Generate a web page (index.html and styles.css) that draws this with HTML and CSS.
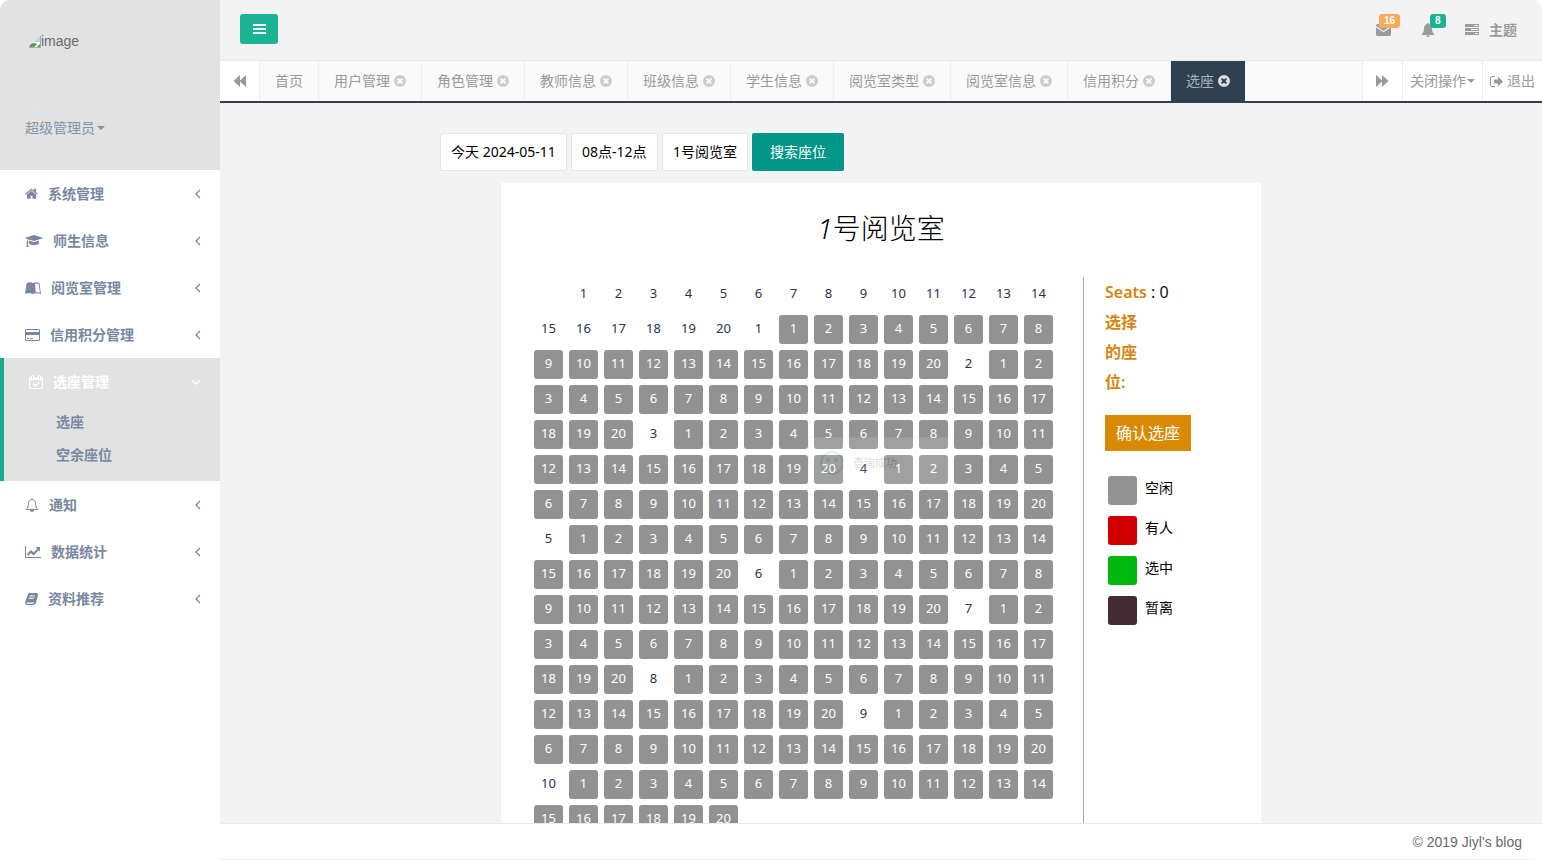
FILE: index.html
```html
<!DOCTYPE html>
<html lang="zh-CN">
<head>
<meta charset="utf-8">
<title>选座</title>
<link rel="stylesheet" href="styles.css">
</head>
<body>
<svg class="sprite" aria-hidden="true">
  <symbol id="left" viewBox="0 0 6 10"><path d="M5 1L1 5l4 4" fill="none" stroke="currentColor" stroke-width="1.3"/></symbol>
  <symbol id="down" viewBox="0 0 10 6"><path d="M1 1l4 4 4-4" fill="none" stroke="currentColor" stroke-width="1.4"/></symbol>
  <symbol id="caret" viewBox="0 0 8 4"><path d="M0 0h8L4 4z"/></symbol>
  <symbol id="close" viewBox="0 0 12 12"><path fill-rule="evenodd" d="M6 0a6 6 0 1 1 0 12A6 6 0 0 1 6 0zM4.300 2.900L2.900 4.300 4.600 6 2.900 7.700l1.400 1.400L6 7.400l1.700 1.700 1.400-1.400L7.400 6l1.700-1.700-1.400-1.400L6 4.600z"/></symbol>
  <symbol id="forward" viewBox="0 0 13 12"><path d="M0 0l6 5.500V0l6.500 6L6 12V6.500L0 12z"/></symbol>
</svg>
<div class="app">
  <aside class="sidebar">
    <div class="profile">
      <div class="avatar">
        <svg width="13" height="14" viewBox="0 0 13 14"><path d="M1 13L12 3v10z" fill="#fff"/><path d="M6 8l6-6v6z" fill="#bcd3f3"/><path d="M1 13c2-4 5-5 8-3l-3 3z" fill="#4ca344"/><path d="M9 13l3-3v3z" fill="#4ca344"/><path d="M12.500 2v11.500H1" fill="none" stroke="#aaa"/></svg><span>image</span>
      </div>
      <div class="user-name">admin</div>
      <button class="role" type="button">超级管理员<svg width="8" height="4"><use href="#caret"/></svg></button>
    </div>
    <nav class="menu">
      <a class="item" href="#system"><svg width="13" height="13" viewBox="64 128 1664 1472"><path d="M1472 992v480q0 26-19 45t-45 19h-384v-384h-256v384h-384q-26 0-45-19t-19-45v-480q0-1 .5-3t.5-3l575-474 575 474q1 2 1 6zm223-69l-62 74q-8 9-21 11h-3q-13 0-21-7l-692-577-692 577q-12 8-24 7-13-2-21-11l-62-74q-8-10-7-23.500t11-21.500l719-599q32-26 76-26t76 26l244 204v-195q0-14 9-23t23-9h192q14 0 23 9t9 23v408l219 182q10 8 11 21.500t-7 23.500z"/></svg><span>系统管理</span><svg class="arrow" width="6" height="10"><use href="#left"/></svg></a>
      <a class="item" href="#people"><svg width="18" height="14" viewBox="0 0 2304 1792"><path d="M1774 836l18 316q4 69-82 128t-235 93.500-323 34.500-323-34.500-235-93.500-82-128l18-316 574 181q22 7 48 7t48-7zm530-324q0 23-22 31l-1120 352q-4 1-10 1t-10-1l-652-206q-43 34-71 111.500t-34 178.500q63 36 63 109 0 69-58 107l58 433q2 14-8 25-9 11-24 11h-192q-15 0-24-11-10-11-8-25l58-433q-58-38-58-107 0-73 65-111 11-207 98-330l-333-104q-22-8-22-31t22-31l1120-352q4-1 10-1t10 1l1120 352q22 8 22 31z"/></svg><span>师生信息</span><svg class="arrow" width="6" height="10"><use href="#left"/></svg></a>
      <a class="item" href="#rooms"><svg width="16" height="12" viewBox="0 0 16 12"><path d="M0 12L1.500 1.500C3.500 0 6.500 0 8 1.300 9.500 0 12.500 0 14.500 1.500L16 12c-2-1-6-1-8 0-2-1-6-1-8 0z"/><path d="M10 1.800c1-.5 2.500-.5 3.600.3L15 10.500c-1.600-.4-3-.4-4.200-.1z" fill="#fff"/></svg><span>阅览室管理</span><svg class="arrow" width="6" height="10"><use href="#left"/></svg></a>
      <a class="item" href="#credit"><svg width="15" height="12" viewBox="0 0 15 12"><path fill-rule="evenodd" d="M1 0h13l1 1v10l-1 1H1l-1-1V1zM1 1v2h13V1zM1 6v5h13V6zM2 9h2v1H2zM5 9h3v1H5z"/></svg><span>信用积分管理</span><svg class="arrow" width="6" height="10"><use href="#left"/></svg></a>
      <div class="group">
        <a class="item" href="#seat"><svg width="14" height="14" viewBox="0 0 14 14"><path fill-rule="evenodd" d="M1 2h1V1l1-1h1l1 1v1h4V1l1-1h1l1 1v1h1l1 1v10l-1 1H1l-1-1V3zM1 5v8h12V5zM3 1v3h1V1zM10 1v3h1V1z"/><path d="M4 8.500L6.200 11 10.500 7" fill="none" stroke="currentColor" stroke-width="1.400"/></svg><span>选座管理</span><svg class="arrow" width="10" height="6"><use href="#down"/></svg></a>
        <a class="sub" href="#pick">选座</a>
        <a class="sub" href="#free">空余座位</a>
      </div>
      <a class="item" href="#notice"><svg width="14" height="14" viewBox="0 0 14 14"><path d="M7 0.500v1M7 1.500C4.500 1.500 3.500 3.500 3.500 5.500 3.500 8.500 2.500 10 1 11.500h12C11.500 10 10.500 8.500 10.500 5.500 10.500 3.500 9.500 1.500 7 1.500z" fill="none" stroke="currentColor"/><path d="M5 12h4a2 2 0 0 1-4 0z"/></svg><span>通知</span><svg class="arrow" width="6" height="10"><use href="#left"/></svg></a>
      <a class="item" href="#stats"><svg width="16" height="12" viewBox="0 0 16 12"><path d="M0 0h1v11h15v1H0z"/><path d="M2.500 9L6 5.500 8.500 8 13 3.500" fill="none" stroke="currentColor" stroke-width="2"/><path d="M10.500 1H15v4.500z"/></svg><span>数据统计</span><svg class="arrow" width="6" height="10"><use href="#left"/></svg></a>
      <a class="item" href="#docs"><svg width="13" height="12" viewBox="0 0 13 12"><path fill-rule="evenodd" d="M4 0h8l1 1-3 10-1 1H1.500Q-.3 11 .2 9L3 1zM4.700 2.500l-.3 1h5.300l.3-1zM4 4.800l-.3 1H9l.3-1zM1.500 9.500q-.4 1.200.5 1.300h6.600l.4-1.300z"/><path d="M12.500 2.500L10 11" stroke="currentColor" fill="none"/></svg><span>资料推荐</span><svg class="arrow" width="6" height="10"><use href="#left"/></svg></a>
    </nav>
  </aside>
  <div class="page">
    <header class="topbar">
      <button class="toggle" type="button" aria-label="菜单"><svg width="13" height="10" viewBox="0 0 13 10"><path d="M0 0h13v2H0zM0 4h13v2H0zM0 8h13v2H0z"/></svg></button>
      <div class="tools">
        <a class="tool" href="#mail" aria-label="消息"><svg width="15" height="12" viewBox="0 0 15 12"><path d="M0 1l1-1h13l1 1v.8L7.500 7 0 1.800zM0 3.200L7.500 8.300 15 3.200V11l-1 1H1l-1-1z"/></svg><span class="badge orange">16</span></a>
        <a class="tool" href="#alerts" aria-label="提醒"><svg width="14" height="14" viewBox="0 0 14 14"><path d="M6.300 0h1.400v1C10 1.500 11 3.200 11 5.500c0 3 .9 4.500 2.500 6v.5H.5v-.5C2.100 10 3 8.500 3 5.500 3 3.200 4 1.500 6.300 1zM5.200 12.400h3.600a1.800 1.800 0 0 1-3.600 0z"/></svg><span class="badge green">8</span></a>
        <a class="tool theme" href="#theme"><svg width="14" height="11" viewBox="0 0 14 11"><path fill-rule="evenodd" d="M0 0h14v3H0zM9 1v1h4V1zM0 4h14v3H0zM6 5v1h7V5zM0 8h14v3H0zM10 9v1h3V9z"/></svg>主题</a>
      </div>
    </header>
    <div class="tabbar">
      <button class="cell scroll" type="button" aria-label="向左"><svg class="flip" width="13" height="12"><use href="#forward"/></svg></button>
      <nav class="tabs">
        <a href="#t0">首页</a>
        <a href="#t1">用户管理<svg width="12" height="12"><use href="#close"/></svg></a>
        <a href="#t2">角色管理<svg width="12" height="12"><use href="#close"/></svg></a>
        <a href="#t3">教师信息<svg width="12" height="12"><use href="#close"/></svg></a>
        <a href="#t4">班级信息<svg width="12" height="12"><use href="#close"/></svg></a>
        <a href="#t5">学生信息<svg width="12" height="12"><use href="#close"/></svg></a>
        <a href="#t6">阅览室类型<svg width="12" height="12"><use href="#close"/></svg></a>
        <a href="#t7">阅览室信息<svg width="12" height="12"><use href="#close"/></svg></a>
        <a href="#t8">信用积分<svg width="12" height="12"><use href="#close"/></svg></a>
        <a class="active" href="#t9">选座<svg width="12" height="12"><use href="#close"/></svg></a>
      </nav>
      <button class="cell scroll next" type="button" aria-label="向右"><svg width="13" height="12"><use href="#forward"/></svg></button>
      <button class="cell ops" type="button">关闭操作<svg width="8" height="4"><use href="#caret"/></svg></button>
      <a class="cell exit" href="#logout"><svg width="13" height="11" viewBox="0 0 13 11"><path d="M5 .5H2Q.5.500.5 2v7q0 1.500 1.500 1.500h3" fill="none" stroke="currentColor"/><path d="M4 3.500h4V.5l5 5-5 5v-3H4z"/></svg>退出</a>
    </div>
    <main class="content">
      <form class="search">
        <input class="day" type="text" value="今天 2024-05-11" aria-label="日期" readonly>
        <input class="hours" type="text" value="08点-12点" aria-label="时段" readonly>
        <input class="room" type="text" value="1号阅览室" aria-label="阅览室" readonly>
        <button type="button">搜索座位</button>
      </form>
      <section class="panel">
        <h2><i>1</i>号阅览室</h2>
        <div class="booking">
          <div class="seats" id="seats"></div>
          <div class="details">
            <p><b>Seats</b> : 0</p>
            <p class="chosen"><b>选择的座位:</b></p>
            <button class="confirm" type="button">确认选座</button>
            <ul class="legend">
              <li><span class="swatch free"></span>空闲</li>
              <li><span class="swatch taken"></span>有人</li>
              <li><span class="swatch picked"></span>选中</li>
              <li><span class="swatch away"></span>暂离</li>
            </ul>
          </div>
        </div>
      </section>
    </main>
    <footer>© 2019 Jiyl's blog</footer>
  </div>
  <div class="toast" role="status"><svg width="24" height="24" viewBox="0 0 24 24"><circle cx="12" cy="12" r="11" fill="none" stroke="#3cb27a" stroke-width="2"/><circle cx="8" cy="9" r="2" fill="#3cb27a"/><circle cx="16" cy="9" r="2" fill="#3cb27a"/><path d="M7 15q5 5 10 0" fill="none" stroke="#3cb27a" stroke-width="2"/></svg>查询成功</div>
</div>
<script src="seats.js"></script>
</body>
</html>
```
FILE: styles.css
```css
* { box-sizing: border-box; }
body {
  margin: 0;
  background: #fff;
  font: 14px/20px "Liberation Sans", "Noto Sans CJK SC", sans-serif;
  color: #676a6c;
}
a { color: inherit; text-decoration: none; }
button { font: inherit; color: inherit; border: 0; padding: 0; background: none; }
svg { fill: currentColor; flex: none; }
.sprite { position: absolute; width: 0; height: 0; }
.app { display: flex; height: 100vh; border-radius: 10px; overflow: hidden; }

.sidebar { width: 220px; flex: none; background: #fff; }
.profile { height: 170px; padding: 30px 25px 0; background: #e2e2e2; }
.avatar { display: flex; align-items: center; height: 70px; padding: 0 0 48px 3px; }
.user-name { height: 18px; font-weight: 700; color: #dde4ee; }
.role { display: flex; align-items: center; gap: 2px; color: #8095a8; }
.menu { font-weight: 600; color: #7888a0; }
.item { display: flex; align-items: center; gap: 10px; height: 47px; padding: 0 19px 0 25px; }
.arrow { margin-left: auto; }
.group { border-left: 4px solid #19aa8d; background: #e2e2e2; padding-bottom: 9px; }
.group .item { height: 48px; padding-bottom: 1px; color: #fff; }
.sub { display: block; padding-left: 52px; line-height: 33px; }

.page { flex: 1; min-width: 0; display: flex; flex-direction: column; background: #f3f3f3; }
.topbar { height: 60px; flex: none; display: flex; align-items: center; justify-content: space-between; padding: 0 25px 2px 20px; color: #999c9e; }
.toggle { width: 38px; height: 30px; border-radius: 3px; background: #1ab394; color: #fff; }
.tools { display: flex; align-items: center; gap: 30px; font-weight: 600; }
.tool { position: relative; display: flex; align-items: center; padding-top: 2px; }
.theme { gap: 10px; padding-top: 1px; }
.badge { position: absolute; left: 3px; bottom: 8px; padding: 0 5px; border-radius: 3px; font-size: 10px; line-height: 14px; color: #fff; }
.badge.green { left: 9px; bottom: 9px; }
.orange { background: #f8ac59; }
.green { background: #1ab394; }

.tabbar { flex: none; display: flex; height: 43px; border-top: 1px solid #e7e7e7; border-bottom: 2px solid #2f4050; background: #fafafa; color: #999; }
.cell { display: flex; align-items: center; justify-content: center; background: #fff; border-left: 1px solid #eee; }
.scroll { width: 40px; }
.scroll:first-child { border-left: 0; border-right: 1px solid #eee; }
.flip { transform: scaleX(-1); }
.tabs { flex: 1; min-width: 0; display: flex; overflow: hidden; }
.tabs a { display: flex; align-items: center; gap: 4px; padding: 0 15px; border-right: 1px solid #eee; white-space: nowrap; }
.tabs svg { color: #ccc; }
.tabs .active { background: #2f4050; color: #a7b1c2; border-right: 0; }
.tabs .active svg { color: #ddd; }
.ops { width: 80px; gap: 1px; }
.exit { width: 60px; gap: 4px; }

.content { flex: 1; min-height: 0; overflow: hidden; padding-top: 30px; font-family: "Noto Sans", "Noto Sans CJK SC", sans-serif; color: #000; }
.search { display: flex; gap: 4px; margin-left: 220px; }
.search input { height: 38px; padding: 0 10px 2px; border: 1px solid #e6e6e6; border-radius: 2px; background: #fff; font: inherit; color: #000; }
.day { width: 127px; }
.hours { width: 87px; }
.room { width: 86px; }
.search button { width: 92px; border-radius: 2px; background: #009688; color: #fff; }
.panel { max-width: 760px; margin: 12px auto 0; padding: 28px 30px; background: #fefefe; }
h2 { margin: 0 0 32px; font: 300 28px/34px "Noto Sans", "Noto Sans CJK SC", sans-serif; text-align: center; }
.booking { display: flex; }
.seats { flex: 1; display: grid; grid-template-columns: repeat(15, 29px); grid-auto-rows: 29px; gap: 6px; padding: 3px; font-size: 13px; line-height: 26px; text-align: center; color: #2a3350; }
.seats button { border-radius: 3px; padding-bottom: 3px; background: #929292; color: #fff; line-height: 26px; }
.details { width: 148px; border-left: 1px solid #aaa; padding-left: 21px; font-size: 16px; line-height: 30px; color: #111; }
.details p { margin: 0; }
.details b { font-weight: 600; color: #d58512; }
.chosen { width: 40px; }
.confirm { width: 86px; height: 36px; margin: 18px 0 22px; background: #d88a04; color: #fff; }
.legend { margin: 0; padding: 3px; list-style: none; font-size: 14px; line-height: 24px; color: #000; }
.legend li { display: flex; gap: 8px; height: 40px; }
.swatch { width: 29px; height: 29px; border-radius: 3px; }
.free { background: #929292; }
.taken { background: #d00000; }
.picked { background: #00b90c; }
.away { background: #452b34; }
footer { flex: none; height: 37px; border-top: 1px solid #e7eaec; border-bottom: 1px solid #eee; background: #fff; padding: 8px 20px; text-align: right; }

.toast { position: absolute; left: 808px; top: 437px; width: 146px; height: 52px; display: flex; align-items: center; gap: 9px; padding-left: 11px; border: 1px solid #d3d4d3; background: #fff; font-size: 11px; color: #000; opacity: .13; }
```
FILE: seats.js
```js
const map = document.getElementById('seats');
const rows = 10;
const columns = 20;

function addLabel(text) {
  const label = document.createElement('span');
  label.textContent = text;
  map.append(label);
}

addLabel('');
for (let column = 1; column <= columns; column++) addLabel(column);

for (let row = 1; row <= rows; row++) {
  addLabel(row);
  for (let column = 1; column <= columns; column++) {
    const seat = document.createElement('button');
    seat.type = 'button';
    seat.textContent = column;
    map.append(seat);
  }
}
```
